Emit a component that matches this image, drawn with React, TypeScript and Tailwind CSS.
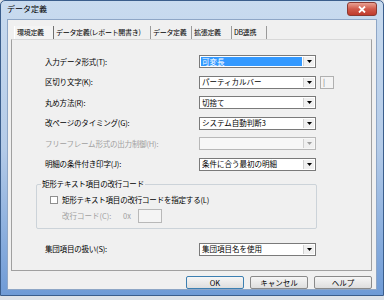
const tabs = [
  { label: '環境定義', w: 'w-[40px]', active: true },
  { label: 'データ定義(レポート開書き)', w: 'w-[97px]', active: false },
  { label: 'データ定義', w: 'w-[41px]', active: false },
  { label: '拡張定義', w: 'w-[40px]', active: false },
  { label: 'DB連携', w: 'w-[35px]', active: false },
]

function Arrow({ disabled }: { disabled?: boolean }) {
  return (
    <div className="w-[11px] h-full flex items-center justify-center bg-[#f0f0f0] border-l border-[#d0d0d0]">
      <svg width="5" height="3" viewBox="0 0 5 3">
        <path d="M0 0h5L2.5 3z" fill={disabled ? '#a0a0a0' : '#000'} />
      </svg>
    </div>
  )
}

function Select({ value, focused, disabled }: { value?: string; focused?: boolean; disabled?: boolean }) {
  return (
    <div
      className={`w-[117px] h-[13px] flex border p-[1px] ${
        disabled ? 'border-[#b8b8b8] bg-[#f7f7f7]' : 'border-[#7a7a7a] bg-white'
      }`}
    >
      <div className="flex-1 flex items-center pr-[1px]">
        <span
          className={`h-full flex-1 flex items-center pl-[1px] leading-none ${
            focused ? 'bg-[#3399ff] text-white' : ''
          }`}
        >
          {value}
        </span>
      </div>
      <Arrow disabled={disabled} />
    </div>
  )
}

function Row({ label, disabled, children }: { label: string; disabled?: boolean; children: React.ReactNode }) {
  return (
    <div className="flex items-center h-[13px]">
      <span className={`w-[154px] leading-none tracking-[-0.2px] ${disabled ? 'text-[#a0a0a0]' : ''}`}>{label}</span>
      {children}
    </div>
  )
}

function Button({ label, primary }: { label: string; primary?: boolean }) {
  return (
    <div
      className={`w-[58px] h-[13px] flex items-center justify-center leading-none rounded-[2px] border bg-gradient-to-b from-[#f6f6f6] to-[#dedede] ${
        primary ? 'border-[#3c7fb1]' : 'border-[#8a8a8a]'
      }`}
    >
      {label}
    </div>
  )
}

export default function App() {
  return (
    <div className="w-[384px] h-[300px] bg-[#dfe3e8] overflow-hidden font-['Noto_Sans_CJK_JP',sans-serif] text-[7.5px] text-black">
      <div className="h-[296px] flex flex-col border border-[#3b5e8c] rounded-t-[5px] bg-gradient-to-b from-[#c9dbef] via-[#b4cbe8] to-[#6f9bd6]">
        {/* Title bar */}
        <div className="h-[18px] flex items-start justify-between pl-[6px] pr-[6px]">
          <span className="mt-[4px] text-[8px] leading-none">データ定義</span>
          <div className="mt-[1px] w-[30px] h-[14px] rounded-[3px] border border-[#8a3a32] bg-gradient-to-b from-[#e8a193] via-[#d0594a] to-[#c03a2c] flex items-center justify-center">
            <svg width="8" height="7" viewBox="0 0 8 7">
              <path d="M1 0.5l6 6M7 0.5l-6 6" stroke="#fff" strokeWidth="1.8" />
            </svg>
          </div>
        </div>

        {/* Client area */}
        <div className="flex-1 mx-[6px] mb-[5px] bg-[#f0f0f0] border border-[#8ea6c6] flex flex-col pl-[3px] pr-[4px] pt-[6px]">
          {/* Tabs */}
          <div className="flex h-[13px] pl-[3px] text-[7px] tracking-[-0.3px]">
            {tabs.map((t) => (
              <div
                key={t.label}
                className={`${t.w} h-[13px] flex items-center pl-[2px] border-r leading-none whitespace-nowrap overflow-hidden ${
                  t.active ? 'border-l border-l-white border-r-[#707070] bg-[#f4f4f4]' : 'border-r-[#9a9a9a]'
                }`}
              >
                {t.label}
              </div>
            ))}
          </div>

          {/* Panel */}
          <div className="h-[232px] border border-[#a0a0a0] border-t-[#d8d8d8] pl-[33px] pt-[15px] flex flex-col">
            <div className="flex flex-col gap-[7.5px]">
              <Row label="入力データ形式(T):">
                <Select value="可変長" focused />
              </Row>
              <Row label="区切り文字(K):">
                <Select value="パーティカルバー" />
                <div className="ml-[4px] w-[14px] h-[13px] border border-[#b0b0b0] bg-[#f4f4f4] flex items-center pl-[2px] text-[#707070] leading-none">
                  |
                </div>
              </Row>
              <Row label="丸め方法(R):">
                <Select value="切捨て" />
              </Row>
              <Row label="改ページのタイミング(G):">
                <Select value="システム自動判断3" />
              </Row>
              <Row label="フリーフレーム形式の出力制御(H):" disabled>
                <Select disabled />
              </Row>
              <Row label="明細の条件付き印字(J):">
                <Select value="条件に合う最初の明細" />
              </Row>
            </div>

            {/* Group box */}
            <div className="relative mt-[13px] ml-[-9px] w-[281px] h-[45px] border border-[#ccd3d9] rounded-[2px] pl-[13px] pt-[11px]">
              <span className="absolute left-[4px] top-[-5px] px-[1px] bg-[#f0f0f0] leading-none tracking-[-0.2px]">
                矩形テキスト項目の改行コード
              </span>
              <div className="flex items-center h-[9px]">
                <div className="w-[8px] h-[8px] border border-[#8f8f8f] bg-white" />
                <span className="ml-[4px] leading-none tracking-[-0.2px]">矩形テキスト項目の改行コードを指定する(L)</span>
              </div>
              <div className="flex items-center h-[14px] mt-[4px] pl-[12px] text-[#a0a0a0]">
                <span className="w-[61px] leading-none">改行コード(C):</span>
                <span className="w-[15px] leading-none">0x</span>
                <div className="w-[24px] h-[14px] border border-[#b8b8b8] bg-[#f4f4f4]" />
              </div>
            </div>

            <div className="mt-[14px]">
              <Row label="集団項目の扱い(S):">
                <Select value="集団項目名を使用" />
              </Row>
            </div>
          </div>

          {/* Buttons */}
          <div className="flex justify-end gap-[6px] mt-[5px]">
            <Button label="OK" primary />
            <Button label="キャンセル" />
            <Button label="ヘルプ" />
          </div>
        </div>
      </div>
    </div>
  )
}
